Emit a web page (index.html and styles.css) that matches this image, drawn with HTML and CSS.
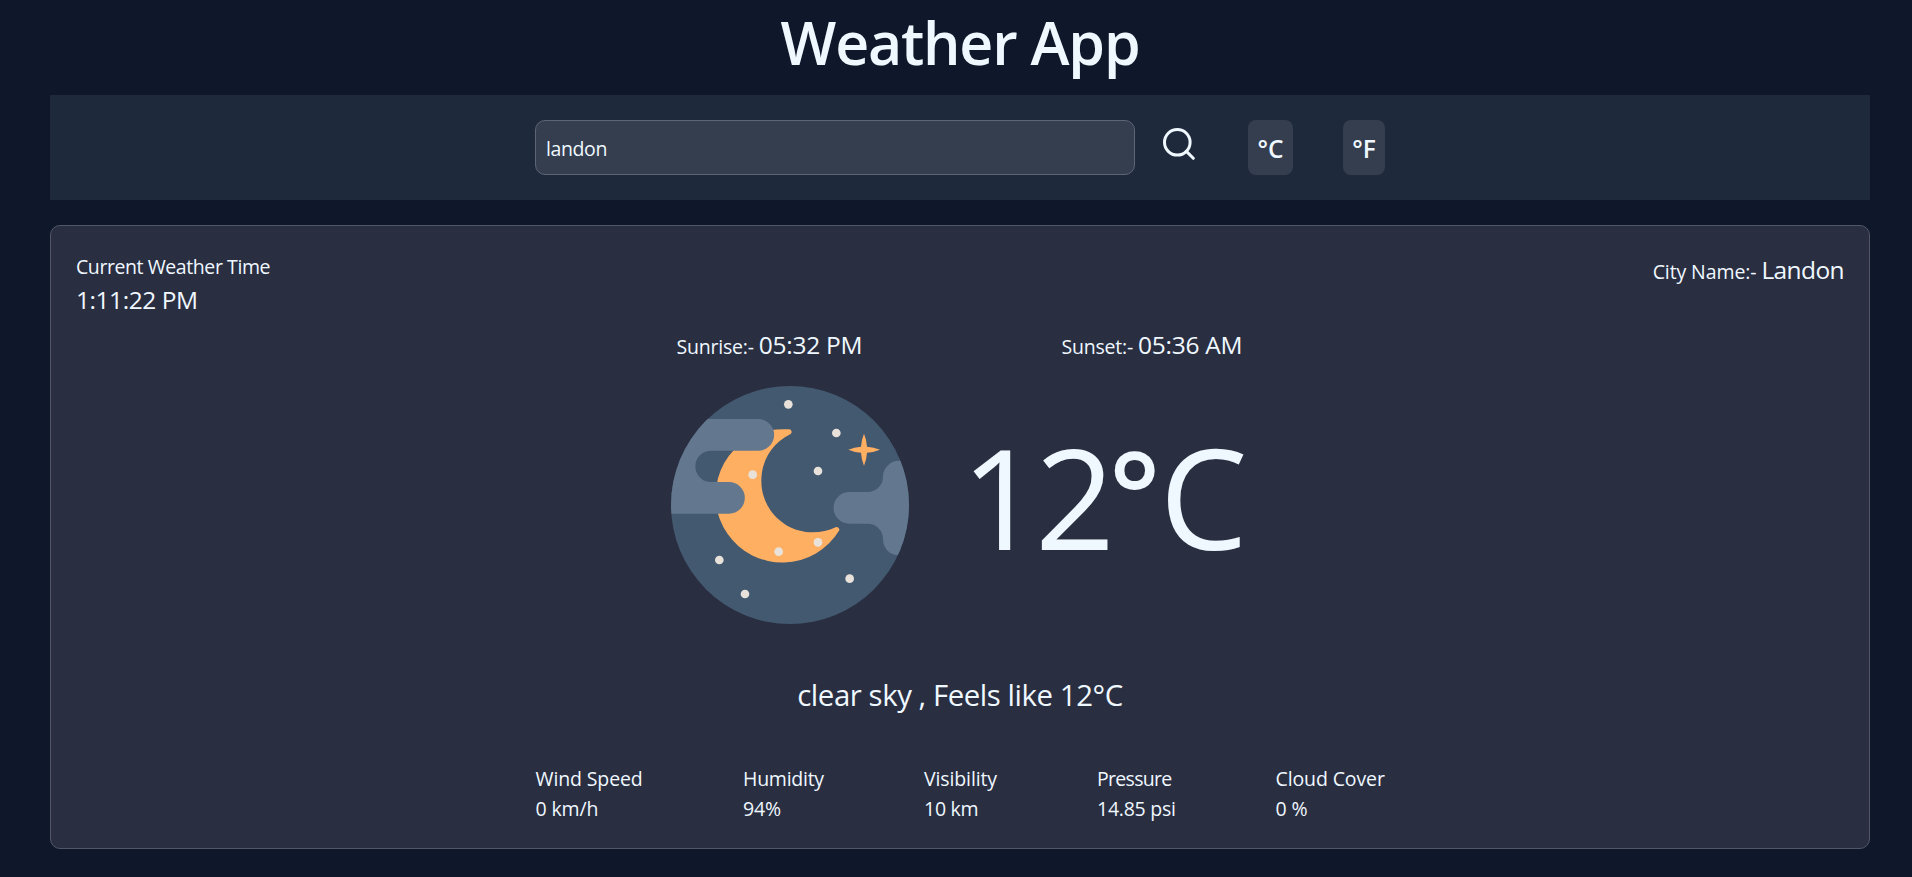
FILE: index.html
```html
<!DOCTYPE html>
<html lang="en">
<head>
<meta charset="utf-8">
<title>Weather App</title>
<link rel="stylesheet" href="styles.css">
</head>
<body>
<h1 class="title">Weather App</h1>
<header class="search-bar">
  <input class="search-input" type="text" value="landon" aria-label="City">
  <button class="search-button" aria-label="Search">
    <svg class="search-icon" viewBox="0 0 32 32"><circle cx="14.3" cy="14.3" r="12.8"/><path d="M23.4 23.4L30.3 30.3"/></svg>
  </button>
  <button class="unit unit-c">°C</button>
  <button class="unit unit-f">°F</button>
</header>
<main class="card">
  <div class="card-top">
    <div class="time-block">
      <p class="time-label">Current Weather Time</p>
      <p class="time-value">1:11:22 PM</p>
    </div>
    <p class="city">City Name:- <span class="big">Landon</span></p>
  </div>
  <div class="sun-row">
    <p class="sunrise">Sunrise:- <span class="big">05:32 PM</span></p>
    <p class="sunset">Sunset:- <span class="big">05:36 AM</span></p>
  </div>
  <div class="now">
    <svg class="moon" viewBox="33 33 714 714">
      <defs><clipPath id="disc"><circle cx="390" cy="390" r="357"/></clipPath></defs>
      <g clip-path="url(#disc)">
        <rect x="33" y="33" width="714" height="714" fill="#435970"/>
        <path fill="#ffaf62" d="M330 166Q358 161 388 163A8 8 0 0 1 392 177C335 205 304 257 304 318C304 403 373 472 458 472C483 472 506 467 527 457A8 8 0 0 1 538 466A200 200 0 1 1 330 166Z"/>
        <path fill="#63788f" d="M0 132H295A47.5 47.5 0 0 1 295 227H153A47 47 0 0 0 153 321H207A47.5 47.5 0 0 1 207 416H0Z"/>
        <path fill="#63788f" d="M760 257H716C690 257 669 280 669 305A46 46 0 0 1 623 351H568A47.5 47.5 0 0 0 568 446H623A46 46 0 0 1 669 492C669 520 690 541 716 541H760Z"/>
        <path fill="#ffaf62" d="M612 176Q620 195 621 215Q641 216 660 224Q641 232 621 233Q620 253 612 272Q604 253 603 233Q583 232 565 224Q583 216 603 215Q604 195 612 176Z"/>
        <g fill="#e9e2da"><circle cx="385" cy="88" r="13"/><circle cx="529" cy="174" r="13"/><circle cx="474" cy="288" r="13"/><circle cx="278" cy="299" r="13"/><circle cx="474" cy="502" r="13"/><circle cx="356" cy="530" r="13"/><circle cx="178" cy="555" r="13"/><circle cx="255" cy="657" r="13"/><circle cx="569" cy="611" r="13"/></g>
      </g>
    </svg>
    <p class="temperature">12<span class="degree">°</span>C</p>
  </div>
  <p class="description">clear sky , Feels like 12°C</p>
  <dl class="stats">
    <div class="stat"><dt>Wind Speed</dt><dd>0 km/h</dd></div>
    <div class="stat"><dt class="snug">Humidity</dt><dd>94%</dd></div>
    <div class="stat"><dt>Visibility</dt><dd class="snug">10 km</dd></div>
    <div class="stat"><dt class="tight">Pressure</dt><dd class="snug">14.85 psi</dd></div>
    <div class="stat"><dt>Cloud Cover</dt><dd>0 %</dd></div>
  </dl>
</main>
</body>
</html>
```
FILE: styles.css
```css
* { box-sizing: border-box; margin: 0; padding: 0; }
body { background: #0f172a; color: #f0f8ff; font-family: "Open Sans", "Noto Sans", sans-serif; font-size: 19.5px; line-height: 30px; padding: 0 42px 0 50px; }

.title { height: 95px; font-size: 59px; font-weight: 600; line-height: 85px; letter-spacing: -1.2px; text-align: center; }

.search-bar { height: 105px; background: #1e293b; display: flex; justify-content: center; align-items: center; }
.search-input { width: 600px; height: 55px; padding: 2px 10px 0; border: 1px solid #5d6575; border-radius: 10px; background: #343e4f; color: inherit; font: inherit; letter-spacing: -0.4px; }
.search-button { width: 63px; height: 55px; margin-right: 50px; background: none; border: 0; }
.search-icon { display: block; width: 32px; height: 32px; margin: -7px 0 0 28px; fill: none; stroke: #f0f8ff; stroke-width: 3; stroke-linecap: round; }
.unit { height: 55px; padding-top: 1px; border: 0; border-radius: 8px; background: #343e4f; color: inherit; font: 600 24.5px "Open Sans", "Noto Sans", sans-serif; }
.unit-c { width: 45px; margin-right: 50px; }
.unit-f { width: 42px; }

.card { height: 624px; margin-top: 25px; padding: 25px; background: #292e41; border: 1px solid #515767; border-radius: 10px; }
.card-top { display: flex; justify-content: space-between; height: 66px; }
.time-label { padding-top: 1px; letter-spacing: -0.42px; }
.time-value { font-size: 24.5px; line-height: 36px; letter-spacing: -0.45px; }
.big { font-size: 24.5px; letter-spacing: -0.25px; }
.city { line-height: 37px; letter-spacing: -0.1px; }
.city .big { letter-spacing: -0.6px; }
.sun-row { display: flex; justify-content: center; gap: 200px; margin-top: 9px; line-height: 37px; letter-spacing: -0.2px; white-space: nowrap; }
.sunrise { width: 185px; }
.sunset { width: 182px; }

.now { display: flex; justify-content: center; gap: 52px; height: 238px; margin-top: 21px; }
.moon { width: 238px; height: 238px; }
.temperature { width: 288px; font-size: 140px; line-height: 219px; letter-spacing: -6px; white-space: nowrap; }
.degree { font-size: 120px; font-weight: 600; line-height: 0; vertical-align: 12px; letter-spacing: -1px; }

.description { margin-top: 49px; font-size: 29.4px; line-height: 45px; letter-spacing: -0.44px; text-align: center; }

.stats { display: grid; grid-template-columns: 107.5px 81px 73px 78.5px 110px; justify-content: center; gap: 100px; margin-top: 46px; padding-left: 1px; letter-spacing: -0.12px; white-space: nowrap; }
.snug { letter-spacing: -0.25px; }
.tight { letter-spacing: -0.7px; }
```
